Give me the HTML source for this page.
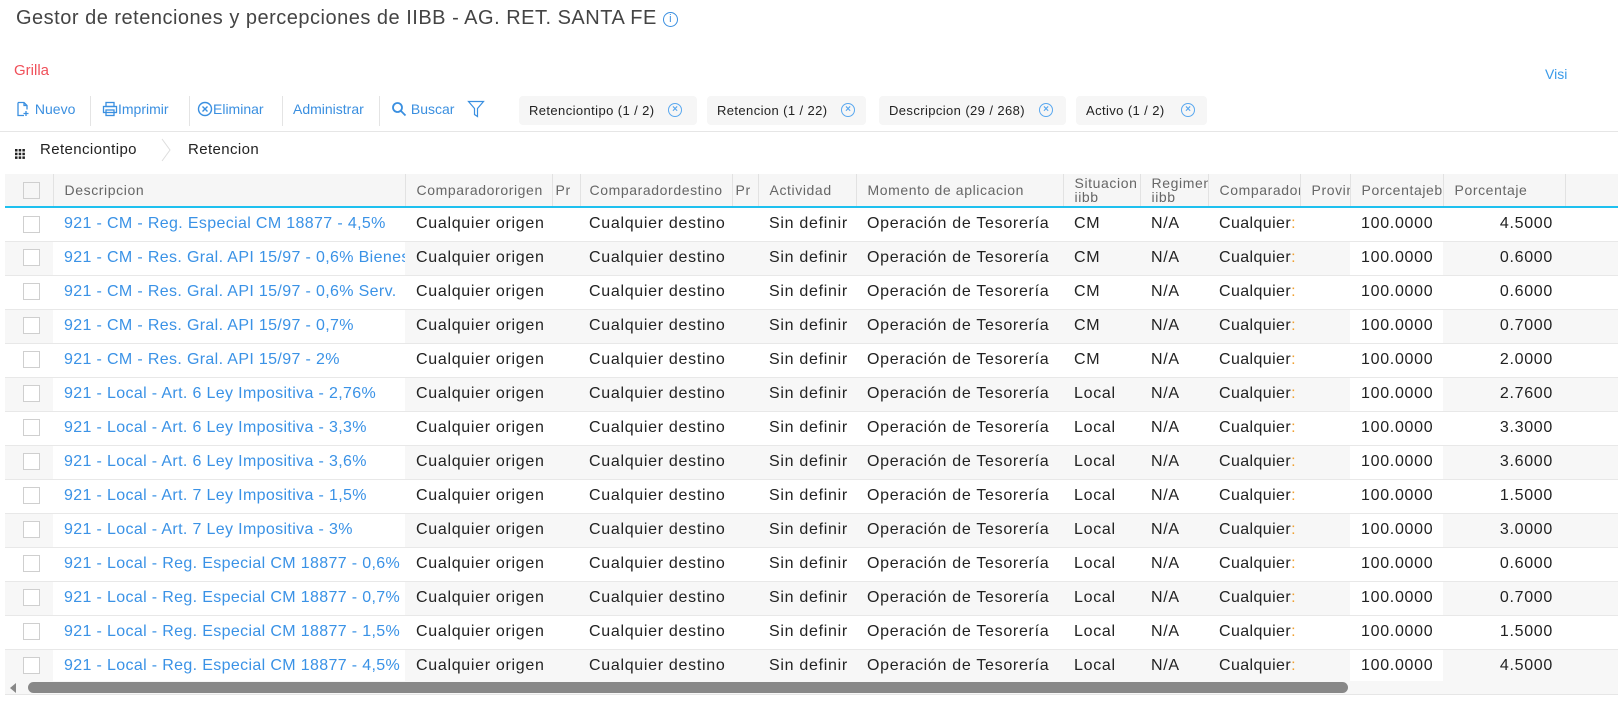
<!DOCTYPE html>
<html><head><meta charset="utf-8"><style>
*{box-sizing:border-box;margin:0;padding:0}
body{width:1618px;height:721px;overflow:hidden;background:#fff;font-family:"Liberation Sans",sans-serif;position:relative;color:#222}
.abs{position:absolute;white-space:nowrap}
.title{left:16px;top:7px;font-size:20px;color:#444;letter-spacing:0.5px}
.grilla{left:14px;top:62px;font-size:15px;color:#f0505a}
.visi{left:1545px;top:66px;font-size:14px;color:#3a9ae8}
.tb{top:96px;height:26px;font-size:14px;color:#3a8fe0;display:flex;align-items:center}
.sep{position:absolute;top:96px;width:1px;height:30px;background:#e4e4e4}
.chip{position:absolute;top:96px;height:29px;background:#f6f6f6;border-radius:4px;font-size:13px;color:#222;display:flex;align-items:center;padding-left:10px;letter-spacing:0.4px}
.x{display:inline-block;width:14px;height:14px;border:1.5px solid #5aa8ef;border-radius:50%;color:#5aa8ef;font-size:10px;line-height:11px;text-align:center;position:absolute;font-weight:bold;letter-spacing:0}
.hline{position:absolute;left:0;top:131px;width:1618px;height:1px;background:#e6e6e6}
table{position:absolute;left:5px;top:174px;border-collapse:collapse;table-layout:fixed;width:1613px;font-size:16px;letter-spacing:0.7px}
th{height:33px;background:#f6f6f6;color:#666;font-weight:normal;text-align:left;padding-left:11px;border-right:1px solid #e2e2e2;white-space:nowrap;overflow:hidden;font-size:14px;line-height:14px;border-bottom:2px solid #1ec0ef;letter-spacing:0.6px}
td{height:34px;padding-left:11px;white-space:nowrap;overflow:hidden;border-bottom:1px solid #e8e8e8;color:#222}
tr.e td{background:#f7f7f7}
tr.e td.w{background:#fff}
td.d{color:#3a92e6;letter-spacing:0.35px}
td.r{text-align:right;padding-right:12px}
.cb{display:inline-block;width:17px;height:17px;border:1px solid #cfcfcf;background:#fff;vertical-align:middle;margin-left:7px}
</style></head><body>
<div class="abs title">Gestor de retenciones y percepciones de IIBB - AG. RET. SANTA FE <span style="display:inline-block;width:15px;height:15px;border:1.3px solid #3a8fe0;border-radius:50%;color:#3a8fe0;font-size:11px;line-height:12px;text-align:center;vertical-align:2px;letter-spacing:0">i</span></div>
<div class="abs grilla">Grilla</div>
<div class="abs visi">Visi</div>
<div class="abs tb" style="left:15px"><svg width="16" height="16" viewBox="0 0 16 16" fill="none" stroke="#3a8fe0" stroke-width="1.3"><path d="M3 1.5h6l3 3v4M3 1.5v13h6M9 1.5v3h3M11 10v5M8.5 12.5h5"/></svg>&nbsp;Nuevo</div>
<div class="sep" style="left:90px"></div>
<div class="abs tb" style="left:102px"><svg width="16" height="16" viewBox="0 0 16 16" fill="none" stroke="#3a8fe0" stroke-width="1.3"><rect x="4" y="1.5" width="8" height="4"/><rect x="1.5" y="5.5" width="13" height="6"/><rect x="4" y="9" width="8" height="5.5"/></svg>Imprimir</div>
<div class="sep" style="left:189px"></div>
<div class="abs tb" style="left:197px"><svg width="16" height="16" viewBox="0 0 16 16" fill="none" stroke="#3a8fe0" stroke-width="1.4"><circle cx="8" cy="8" r="6.5"/><path d="M5.5 5.5l5 5M10.5 5.5l-5 5"/></svg>Eliminar</div>
<div class="sep" style="left:282px"></div>
<div class="abs tb" style="left:293px">Administrar</div>
<div class="sep" style="left:379px"></div>
<div class="abs tb" style="left:391px"><svg width="16" height="16" viewBox="0 0 16 16" fill="none" stroke="#3a8fe0" stroke-width="1.8"><circle cx="6.5" cy="6.5" r="4.5"/><path d="M10 10l4.5 4.5"/></svg>&nbsp;Buscar</div>
<div class="abs" style="left:467px;top:100px"><svg width="18" height="18" viewBox="0 0 18 18" fill="none" stroke="#3a8fe0" stroke-width="1.2"><path d="M1.5 1.5h15l-6 7v8l-3-2v-6z"/></svg></div>
<div class="chip" style="left:519px;width:178px">Retenciontipo (1 / 2)<span class="x" style="left:149px;top:7px">×</span></div>
<div class="chip" style="left:707px;width:159px">Retencion (1 / 22)<span class="x" style="left:134px;top:7px">×</span></div>
<div class="chip" style="left:879px;width:187px">Descripcion (29 / 268)<span class="x" style="left:160px;top:7px">×</span></div>
<div class="chip" style="left:1076px;width:131px">Activo (1 / 2)<span class="x" style="left:105px;top:7px">×</span></div>
<div class="hline"></div>
<div class="abs" style="left:15px;top:146px"><svg width="10" height="10" viewBox="0 0 10 10" fill="#222"><rect x="0" y="0" width="2.5" height="2.5"/><rect x="3.7" y="0" width="2.5" height="2.5"/><rect x="7.4" y="0" width="2.5" height="2.5"/><rect x="0" y="3.7" width="2.5" height="2.5"/><rect x="3.7" y="3.7" width="2.5" height="2.5"/><rect x="7.4" y="3.7" width="2.5" height="2.5"/><rect x="0" y="7.4" width="2.5" height="2.5"/><rect x="3.7" y="7.4" width="2.5" height="2.5"/><rect x="7.4" y="7.4" width="2.5" height="2.5"/></svg></div>
<div class="abs" style="left:40px;top:141px;font-size:15px;letter-spacing:0.4px">Retenciontipo</div>
<div class="abs" style="left:160px;top:137px"><svg width="12" height="26" viewBox="0 0 12 26" fill="none" stroke="#ddd"><path d="M2 2l8 11-8 11"/></svg></div>
<div class="abs" style="left:188px;top:141px;font-size:15px;letter-spacing:0.4px">Retencion</div>
<table>
<colgroup><col style="width:48px"><col style="width:352px"><col style="width:147px"><col style="width:28px"><col style="width:152px"><col style="width:26px"><col style="width:98px"><col style="width:207px"><col style="width:77px"><col style="width:68px"><col style="width:92px"><col style="width:50px"><col style="width:93px"><col style="width:122px"><col style="width:53px"></colgroup>
<tr><th style="padding-left:11px"><span class="cb" style="margin-left:7px;background:#f6f6f6"></span></th><th>Descripcion</th><th>Comparadororigen</th><th style="padding-left:3px">Pr</th><th style="padding-left:9px">Comparadordestino</th><th style="padding-left:3px">Pr</th><th>Actividad</th><th>Momento de aplicacion</th><th>Situacion<br>iibb</th><th>Regimen<br>iibb</th><th>Comparador</th><th>Provincia</th><th>Porcentajeb</th><th>Porcentaje</th><th></th></tr>
<tbody id="b"></tbody>
</table>
<script>
var d=[["921 - CM - Reg. Especial CM 18877 - 4,5%","CM","4.5000"],["921 - CM - Res. Gral. API 15/97 - 0,6% Bienes","CM","0.6000"],["921 - CM - Res. Gral. API 15/97 - 0,6% Serv.","CM","0.6000"],["921 - CM - Res. Gral. API 15/97 - 0,7%","CM","0.7000"],["921 - CM - Res. Gral. API 15/97 - 2%","CM","2.0000"],["921 - Local - Art. 6 Ley Impositiva - 2,76%","Local","2.7600"],["921 - Local - Art. 6 Ley Impositiva - 3,3%","Local","3.3000"],["921 - Local - Art. 6 Ley Impositiva - 3,6%","Local","3.6000"],["921 - Local - Art. 7 Ley Impositiva - 1,5%","Local","1.5000"],["921 - Local - Art. 7 Ley Impositiva - 3%","Local","3.0000"],["921 - Local - Reg. Especial CM 18877 - 0,6%","Local","0.6000"],["921 - Local - Reg. Especial CM 18877 - 0,7%","Local","0.7000"],["921 - Local - Reg. Especial CM 18877 - 1,5%","Local","1.5000"],["921 - Local - Reg. Especial CM 18877 - 4,5%","Local","4.5000"]];
var h="";d.forEach(function(r,i){h+='<tr class="'+(i%2?'e':'')+'"><td><span class="cb"></span></td><td class="d w">'+r[0]+'</td><td>Cualquier origen</td><td></td><td style="padding-left:9px">Cualquier destino</td><td></td><td>Sin definir</td><td>Operación de Tesorería</td><td>'+r[1]+'</td><td>N/A</td><td style="letter-spacing:0.4px">Cualquier<span style="color:#f0a030">:</span></td><td></td><td class="w">100.0000</td><td class="r">'+r[2]+'</td><td></td></tr>'});document.getElementById("b").innerHTML=h;
</script>
<div class="abs" style="left:5px;top:681px;width:1613px;height:14px;background:#f7f7f7;border-bottom:1px solid #e6e6e6"></div>
<div class="abs" style="left:10px;top:683px;width:0;height:0;border-top:5px solid transparent;border-bottom:5px solid transparent;border-right:6px solid #888"></div>
<div class="abs" style="left:28px;top:682px;width:1320px;height:11px;background:#888;border-radius:6px"></div>
</body></html>
